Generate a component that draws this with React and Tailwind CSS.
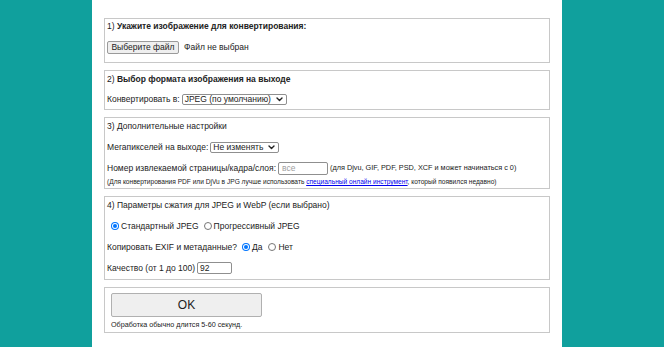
import React from "react";

function Chevron() {
  return (
    <svg width="7" height="5" viewBox="0 0 7 5" className="shrink-0">
      <path d="M1 1 L3.5 3.5 L6 1" fill="none" stroke="#222" strokeWidth="1.4" strokeLinecap="round" strokeLinejoin="round" />
    </svg>
  );
}

function Select({ text, w }) {
  return (
    <div className={`${w} h-[11px] border border-[#8f8f8f] rounded-[2px] bg-white flex items-center justify-between pl-[2px] pr-[3px] leading-none`}>
      <span>{text}</span>
      <Chevron />
    </div>
  );
}

function Radio({ checked }) {
  return checked ? (
    <span className="w-[8px] h-[8px] rounded-full bg-[#0075ff] flex items-center justify-center shrink-0">
      <span className="w-[6px] h-[6px] rounded-full bg-white flex items-center justify-center">
        <span className="w-[4px] h-[4px] rounded-full bg-[#0075ff]" />
      </span>
    </span>
  ) : (
    <span className="block w-[8px] h-[8px] rounded-full border border-[#767676] bg-white shrink-0" />
  );
}

export default function App() {
  return (
    <div className="w-[664px] h-[347px] bg-[#10a09d] overflow-hidden font-['Liberation_Sans',Arial,sans-serif] text-[#222] text-[8.5px]">
      <div className="ml-[92px] w-[470px] h-[347px] bg-white px-[12px] pt-[18px]">
        {/* Box 1 */}
        <div className="h-[45px] border border-[#c8c8c8] px-[2px] pt-[1px]">
          <div className="h-[12px] leading-[12px]">
            1) <b>Укажите изображение для конвертирования:</b>
          </div>
          <div className="mt-[9px] flex items-center h-[13px]">
            <div className="w-[72px] h-[13px] bg-[#efefef] border border-[#9a9a9a] rounded-[2px] flex items-center justify-center leading-none">
              Выберите файл
            </div>
            <span className="ml-[5px]">Файл не выбран</span>
          </div>
        </div>

        {/* Box 2 */}
        <div className="mt-[7px] h-[40px] border border-[#c8c8c8] px-[2px] pt-[2px]">
          <div className="h-[12px] leading-[12px]">
            2) <b>Выбор формата изображения на выходе</b>
          </div>
          <div className="mt-[9px] flex items-center h-[11px]">
            <span className="mr-[2px]">Конвертировать в:</span>
            <Select text="JPEG (по умолчанию)" w="w-[105px]" />
          </div>
        </div>

        {/* Box 3 */}
        <div className="mt-[7px] h-[72px] border border-[#c8c8c8] px-[2px] pt-[2px]">
          <div className="h-[12px] leading-[12px]">3) Дополнительные настройки</div>
          <div className="mt-[10px] flex items-center h-[11px]">
            <span className="mr-[2px]">Мегапикселей на выходе:</span>
            <Select text="Не изменять" w="w-[69px]" />
          </div>
          <div className="mt-[9px] flex items-center h-[13px]">
            <span className="mr-[2px]">Номер извлекаемой страницы/кадра/слоя:</span>
            <div className="w-[50px] h-[13px] border border-[#8f8f8f] rounded-[2px] flex items-center pl-[3px] text-[#a0a0a0] leading-none">
              все
            </div>
            <span className="ml-[2px] text-[7.3px]">(для Djvu, GIF, PDF, PSD, XCF и может начинаться с 0)</span>
          </div>
          <div className="mt-[3px] h-[7px] leading-[7px] text-[6.6px]">
            (Для конвертирования PDF или DjVu в JPG лучше использовать{" "}
            <span className="text-[#0000ee] underline">специальный онлайн инструмент</span>, который появился недавно)
          </div>
        </div>

        {/* Box 4 */}
        <div className="mt-[7px] h-[84px] border border-[#c8c8c8] px-[2px] pt-[2px]">
          <div className="h-[12px] leading-[12px]">4) Параметры сжатия для JPEG и WebP (если выбрано)</div>
          <div className="mt-[9px] flex items-center h-[12px]">
            <span className="ml-[4px]"><Radio checked /></span>
            <span className="ml-[2px]">Стандартный JPEG</span>
            <span className="ml-[5px]"><Radio /></span>
            <span className="ml-[2px]">Прогрессивный JPEG</span>
          </div>
          <div className="mt-[9px] flex items-center h-[12px]">
            <span>Копировать EXIF и метаданные?</span>
            <span className="ml-[5px]"><Radio checked /></span>
            <span className="ml-[2px]">Да</span>
            <span className="ml-[6px]"><Radio /></span>
            <span className="ml-[2px]">Нет</span>
          </div>
          <div className="mt-[9px] flex items-center h-[12px]">
            <span className="mr-[2px]">Качество (от 1 до 100)</span>
            <div className="w-[35px] h-[12px] border border-[#8f8f8f] rounded-[2px] flex items-center pl-[2px] leading-none">
              92
            </div>
          </div>
        </div>

        {/* Box 5 */}
        <div className="mt-[7px] h-[46px] border border-[#c8c8c8] px-[6px] pt-[5px]">
          <div className="w-[151px] h-[24px] bg-[#efefef] border border-[#b0b0b0] rounded-[2px] flex items-center justify-center text-[12px] leading-none">
            OK
          </div>
          <div className="mt-[4px] h-[7px] leading-[7px] text-[7.2px]">Обработка обычно длится 5-60 секунд.</div>
        </div>
      </div>
    </div>
  );
}
